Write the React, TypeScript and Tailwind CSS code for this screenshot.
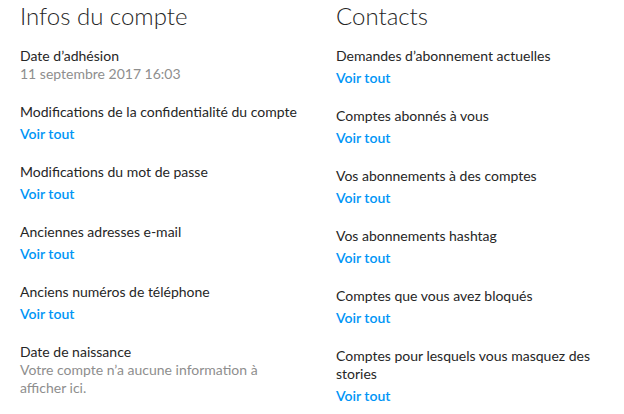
import React from "react";

type Item = { label: string; value?: string; link?: boolean };

const account: Item[] = [
  { label: "Date d’adhésion", value: "11 septembre 2017 16:03" },
  { label: "Modifications de la confidentialité du compte", link: true },
  { label: "Modifications du mot de passe", link: true },
  { label: "Anciennes adresses e-mail", link: true },
  { label: "Anciens numéros de téléphone", link: true },
  { label: "Date de naissance", value: "Votre compte n’a aucune information à afficher ici." },
];

const contacts: Item[] = [
  { label: "Demandes d’abonnement actuelles", link: true },
  { label: "Comptes abonnés à vous", link: true },
  { label: "Vos abonnements à des comptes", link: true },
  { label: "Vos abonnements hashtag", link: true },
  { label: "Comptes que vous avez bloqués", link: true },
  { label: "Comptes pour lesquels vous masquez des stories", link: true },
];

function Section({ title, items }: { title: string; items: Item[] }) {
  return (
    <div className="w-[284px] shrink-0">
      <h2 className="pt-[1px] text-[24px] leading-[30px] font-light text-[#262626] mb-[16px]">{title}</h2>
      {items.map((item, i) => (
        <div key={i} className="mb-[20px]">
          <div className="text-[14px] leading-[18px] text-[#262626]">{item.label}</div>
          {item.value && <div className="text-[14px] leading-[18px] text-[#8e8e8e]">{item.value}</div>}
          {item.link && (
            <div className="mt-[4px] text-[14px] leading-[18px] font-semibold text-[#0095f6]">Voir tout</div>
          )}
        </div>
      ))}
    </div>
  );
}

export default function App() {
  return (
    <div className="bg-white h-[414px] overflow-hidden flex gap-[32px] pl-[20px]" style={{ fontFamily: "Lato, sans-serif" }}>
      <Section title="Infos du compte" items={account} />
      <Section title="Contacts" items={contacts} />
    </div>
  );
}
